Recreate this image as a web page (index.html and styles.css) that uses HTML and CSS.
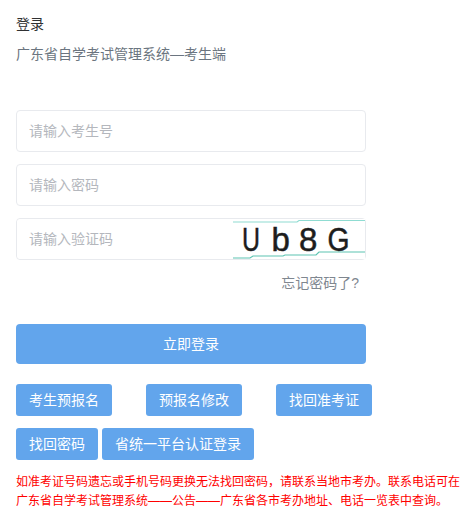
FILE: index.html
```html
<!DOCTYPE html>
<html lang="zh-CN">
<head>
<meta charset="UTF-8">
<title>登录</title>
<link rel="stylesheet" href="styles.css">
</head>
<body>

<div class="login">
  <h1 class="title">登录</h1>
  <p class="subtitle">广东省自学考试管理系统—考生端</p>

  <form class="login-form">
    <input type="text" class="field" placeholder="请输入考生号">
    <input type="password" class="field" placeholder="请输入密码">
    <div class="captcha-row">
      <input type="text" class="field captcha-input" placeholder="请输入验证码">
      <svg class="captcha" width="132" height="40" viewBox="0 0 132 40">
        <path d="M0 3H64L66 1.5H132" fill="none" stroke="#8fdcd2" stroke-width="1.2"/>
        <path d="M0 39H17L20 37H50L52 36H83L86 33H132" fill="none" stroke="#5cc4b2" stroke-width="1.2"/>
        <text x="9" y="32" class="captcha-text" textLength="18" lengthAdjust="spacingAndGlyphs">U</text>
        <text x="38.5" y="32" class="captcha-text">b</text>
        <text x="66" y="32" class="captcha-text">8</text>
        <text x="94.5" y="32" class="captcha-text" textLength="22" lengthAdjust="spacingAndGlyphs">G</text>
      </svg>
    </div>
    <div class="forgot"><a href="#">忘记密码了?</a></div>
    <button type="button" class="submit">立即登录</button>
  </form>

  <div class="links links-first">
    <a class="link-button" href="#">考生预报名</a>
    <a class="link-button" href="#">预报名修改</a>
    <a class="link-button" href="#">找回准考证</a>
  </div>
  <div class="links links-second">
    <a class="link-button" href="#">找回密码</a>
    <a class="link-button" href="#">省统一平台认证登录</a>
  </div>

  <p class="notice">如准考证号码遗忘或手机号码更换无法找回密码，请联系当地市考办。联系电话可在广东省自学考试管理系统——公告——广东省各市考办地址、电话一览表中查询。</p>
</div>

</body>
</html>
```
FILE: styles.css
```css
* {
  box-sizing: border-box;
}

body {
  margin: 0;
  background-color: #fff;
  font-family: "Liberation Sans", "Noto Sans CJK SC", sans-serif;
  font-size: 14px;
  color: #606266;
}

.login {
  padding: 14px 0 0 16px;
  width: 462px;
}

.title {
  margin: 0;
  font-size: 14px;
  font-weight: normal;
  line-height: 20px;
  color: #303133;
}

.subtitle {
  margin: 10px 0 0;
  line-height: 20px;
  color: #6b7580;
}

.login-form {
  display: flex;
  flex-direction: column;
  width: 350px;
  margin-top: 46px;
}

.field {
  width: 100%;
  height: 42px;
  padding: 0 12px;
  margin-bottom: 12px;
  border: 1px solid #e8eaee;
  border-radius: 4px;
  outline: none;
  font: inherit;
  color: #606266;
}

.field::placeholder {
  color: #b4b7bd;
  opacity: 1;
}

.captcha-row {
  display: flex;
  height: 42px;
  margin-bottom: 12px;
  border: 1px solid #e8eaee;
  border-radius: 4px;
}

.captcha-input {
  flex: 1;
  min-width: 0;
  height: 40px;
  margin-bottom: 0;
  border: none;
}

.captcha {
  display: block;
  flex: none;
  background-color: #fff;
}

.captcha-text {
  font-family: "Liberation Sans", sans-serif;
  font-size: 33px;
  fill: #1d1d1d;
  stroke: #1d1d1d;
  stroke-width: 0.5px;
}

.forgot {
  text-align: right;
  padding-right: 7px;
  line-height: 22px;
}

.forgot a {
  color: #7f8790;
  text-decoration: none;
}

.submit {
  height: 40px;
  margin-top: 30px;
  padding-bottom: 3px;
  border: none;
  border-radius: 4px;
  background-color: #62a5ec;
  color: #fff;
  font: inherit;
  cursor: pointer;
}

.links {
  display: flex;
}

.links-first {
  gap: 34px;
  margin-top: 20px;
}

.links-second {
  gap: 4px;
  margin-top: 12px;
}

.link-button {
  height: 32px;
  padding: 0 13px;
  border-radius: 3px;
  background-color: #62a5ec;
  color: #fff;
  line-height: 32px;
  text-decoration: none;
}

.notice {
  margin: 13px 0 0;
  font-size: 12px;
  line-height: 19px;
  color: #f00;
}
```
